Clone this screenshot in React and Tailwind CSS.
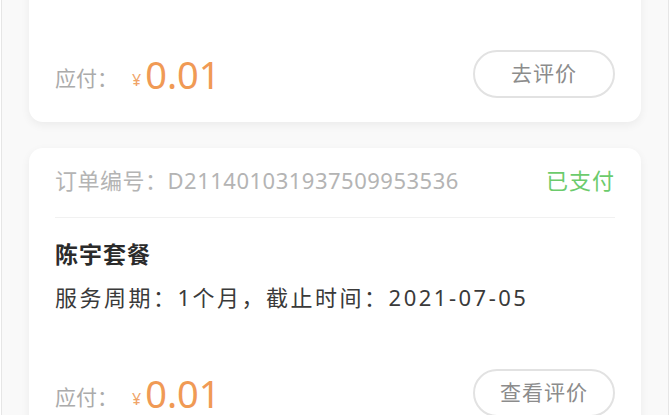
import React from 'react'

const font = {
  fontFamily: '"Noto Sans", "Noto Sans CJK SC", sans-serif',
}

function PriceRow({ label, top }) {
  return (
    <div className={`flex items-center justify-between ${top}`}>
      <div className="flex items-end">
        <span className="mb-[4px] text-[21px] leading-[28px] text-[#ababab]">应付：</span>
        <span className="mb-[6px] ml-[14px] text-[16px] leading-[20px] text-[#f0a468]">¥</span>
        <span className="ml-[4px] text-[38px] leading-[44px] text-[#f09a55]">0.01</span>
      </div>
      <button className="flex h-[48px] w-[142px] items-center justify-center rounded-full border-2 border-[#e2e2e2] bg-white text-[21px] tracking-[1px] text-[#8c8c8c]">
        {label}
      </button>
    </div>
  )
}

function OrderCard({ orderNo, title, period, button, gap }) {
  return (
    <div className="rounded-[14px] bg-white px-[26px] pb-[24px] shadow-[0_3px_10px_rgba(0,0,0,0.06)]">
      <div className="flex items-center justify-between pt-[18px] pb-[23px] leading-[28px]">
        <span className="text-[22px] tracking-[0.5px] text-[#b4b4b4]">订单编号：{orderNo}</span>
        <span className="text-[22px] tracking-[1px] text-[#6ccb6c]">已支付</span>
      </div>
      <div className="h-px bg-[#f1f1f1]"></div>
      <div className="mt-[22px] text-[23px] leading-[28px] font-bold tracking-[1px] text-[#2b2b2b]">{title}</div>
      <div className="mt-[15px] text-[22px] leading-[28px] tracking-[2.5px] text-[#3a3a3a]">{period}</div>
      <PriceRow label={button} top={gap} />
    </div>
  )
}

export default function App() {
  return (
    <div className="h-[415px] w-[670px] overflow-hidden bg-white px-px" style={font}>
      <div className="h-[415px] overflow-hidden border-x border-[#e6e6e6] bg-[#f9f9f9]">
        <div className="-mt-[162px] flex flex-col gap-[26px] px-[27px]">
          <OrderCard
            orderNo="D211401031937509953536"
            title="陈宇套餐"
            period="服务周期：1个月，截止时间：2021-07-05"
            button="去评价"
            gap="mt-[49px]"
          />
          <OrderCard
            orderNo="D211401031937509953536"
            title="陈宇套餐"
            period="服务周期：1个月，截止时间：2021-07-05"
            button="查看评价"
            gap="mt-[58px]"
          />
        </div>
      </div>
    </div>
  )
}
